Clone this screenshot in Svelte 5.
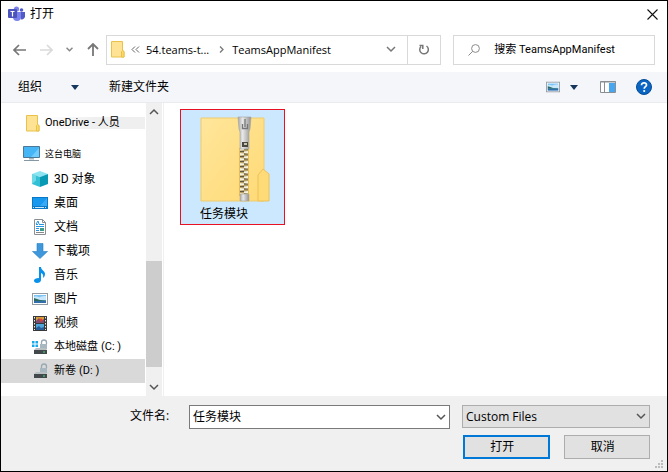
<script>
  let fileName = $state('任务模块');
  let search = $state('');
  let selected = $state('新卷');

  const places = [
    { icon: 'cube', label: '3D 对象' },
    { icon: 'desktop', label: '桌面' },
    { icon: 'document', label: '文档' },
    { icon: 'download', label: '下载项' },
    { icon: 'music', label: '音乐' },
    { icon: 'picture', label: '图片' },
    { icon: 'video', label: '视频' },
    { icon: 'windrive', label: '本地磁盘', drive: '(C: )' },
    { icon: 'drive', label: '新卷', drive: '(D: )' }
  ];
</script>

{#snippet folder()}
  <svg width="14" height="17" viewBox="0 0 14 17">
    <path d="M.5 .5h11v9l1.5 1v5.500H.5z" fill="#ffe394" stroke="#e8c24b" />
    <path d="M10.500 16v-5.500l1-1 1.500 1V16z" fill="#ffd968" stroke="#e8c24b" />
  </svg>
{/snippet}

{#snippet picture()}
  <rect x=".5" y="2.500" width="15" height="11" fill="#fff" stroke="#929ba3" />
  <path d="M2 4h12v8H2z" fill="#7cc4f4" />
  <path d="M2 6c3-2 4 1 6 0s4-1 6-1v4H2z" fill="#c9e7fa" />
  <path d="M2 7l3 1 3 1 6 .5V10H2z" fill="#2d6b62" />
  <path d="M2 10h12v2H2z" fill="#326fa8" />
{/snippet}

{#snippet chevron()}
  <svg width="10" height="7" viewBox="0 0 10 7"><path d="M1 1l4 4 4-4" fill="none" stroke="currentColor" stroke-width="1.500" /></svg>
{/snippet}

{#snippet placeIcon(name)}
  <svg width="16" height="16" viewBox="0 0 16 16">
    {#if name === 'cube'}
      <path d="M8 0l8 3-8 3-8-3z" fill="#8ce4f0" />
      <path d="M0 3l8 3v10l-8-3z" fill="#35bfd5" />
      <path d="M16 3L8 6v10l8-3z" fill="#0899b5" />
      <path d="M0 3l4 1.500v5L0 13z" fill="#6ed9e6" />
    {:else if name === 'desktop'}
      <path d="M0 2h16v12H0z" fill="#0878c9" />
      <path d="M1 3h14v8H1z" fill="#1698ee" />
      <path d="M8 11l7-8v8z" fill="#38aaf5" />
      <path d="M1 12.500h1m1 0h9m1 0h1" stroke="#c7e9ff" />
    {:else if name === 'document'}
      <path d="M2.500 .5h8l3 3v12h-11z" fill="#fff" stroke="#8a8f94" />
      <path d="M10.500 .5v3h3" fill="none" stroke="#8a8f94" />
      <path d="M4 5.500h2M7 5.500h5M4 7.500h8M4 9.500h3M4 11.500h3" stroke="#2694e0" />
      <path d="M4 5l2-3 1 3" fill="none" stroke="#2694e0" />
      <path d="M8 9h4v3H8z" fill="#3c9c86" /><path d="M4 13.500h8" stroke="#888" />
    {:else if name === 'download'}
      <path d="M5 .5h6v8h4.500L8 15.500.5 8.500H5z" fill="#3f97dc" stroke="#277fc5" stroke-width=".6" />
    {:else if name === 'music'}
      <path d="M7 0h2c0 3 4 4 4 7 0 2-1 3-2 4 .5-3 0-4-2-5v7c0 2-2 3-4 3s-3-1-3-2.500S4 11 7 11z" fill="#0791ea" />
    {:else if name === 'picture'}
      {@render picture()}
    {:else if name === 'video'}
      <path d="M1 1h14v15H1z" fill="#393939" />
      <path d="M2.500 2v13M13.500 2v13" stroke="#eee" stroke-dasharray="1.500 1.500" />
      <path d="M4 2h8v6H4z" fill="#d69d38" /><path d="M4 9h8v6H4z" fill="#4da7dc" />
      <path d="M4 6l3-3 2 3 3-2v4H4z" fill="#7c4c74" /><path d="M4 13l3-2 2 2 3-1v3H4z" fill="#295d9a" />
      <circle cx="9" cy="5" r="1.500" fill="#e33c2e" />
    {:else}
      {#if name === 'windrive'}
        <path d="M0 2h2.500v2.500H0zM3.500 2H6v2.500H3.500zM0 5.500h2.500V8H0zM3.500 5.500H6V8H3.500z" fill="#13a9eb" />
      {/if}
      <path d="M9.500 5V3.500a2.500 2.500 0 0 1 5 0V5" fill="none" stroke="#99a9b3" stroke-width="1.300" />
      <path d="M8 5h7v5H8z" fill="#a8b8c1" />
      <path d="M4 9h9l2 2H2z" fill="#b9c0c3" />
      <path d="M2 11h13v4H2z" fill="#42484c" />
      <path d="M11 13h2" stroke="#3be26a" />
    {/if}
  </svg>
{/snippet}

<main class="dialog">
  <header class="title">
    <svg width="17" height="16" viewBox="0 0 17 16">
      <circle cx="13.500" cy="4" r="1.800" fill="#5059c9" />
      <circle cx="8.500" cy="3" r="2.600" fill="#7b83eb" />
      <path d="M11 6h6v4.500a3 3 0 0 1-4 2.700z" fill="#5059c9" />
      <path d="M5 6h8v5a4 4 0 0 1-8 0z" fill="#7b83eb" />
      <rect y="3" width="9" height="9" rx="1" fill="#4b53bc" />
      <path d="M2.500 5.500h4M4.500 5.500v5" stroke="#fff" stroke-width="1.200" />
    </svg>
    <h1>打开</h1>
    <button class="plain close" aria-label="关闭">
      <svg width="11" height="11" viewBox="0 0 11 11"><path d="M.5 .5l10 10M10.500 .5l-10 10" stroke="#111" stroke-width="1.100" /></svg>
    </button>
  </header>

  <div class="navbar">
    <div class="arrows">
      <button class="plain" aria-label="后退"><svg width="13" height="12" viewBox="0 0 13 12"><path d="M13 6H1M6 1L1 6l5 5" fill="none" stroke="#777" stroke-width="1.700" /></svg></button>
      <button class="plain" aria-label="前进"><svg width="13" height="12" viewBox="0 0 13 12"><path d="M0 6h12M7 1l5 5-5 5" fill="none" stroke="#dadada" stroke-width="1.700" /></svg></button>
      <button class="plain" aria-label="最近位置"><svg width="7" height="5" viewBox="0 0 7 5"><path d="M.5 .7l3 3 3-3" fill="none" stroke="#888" stroke-width="1.500" /></svg></button>
      <button class="plain" aria-label="上移"><svg width="12" height="13" viewBox="0 0 12 13"><path d="M6 13V1M1 6l5-5 5 5" fill="none" stroke="#777" stroke-width="1.800" /></svg></button>
    </div>
    <div class="address">
      {@render folder()}
      <svg class="quote" width="9" height="7" viewBox="0 0 9 7"><path d="M4 .5l-3 3 3 3M8 .5l-3 3 3 3" fill="none" stroke="#666" /></svg>
      <a class="crumb first" href="#parent">54.teams-t...</a>
      <svg class="sep" width="5" height="7" viewBox="0 0 5 7"><path d="M1 .5l3 3-3 3" fill="none" stroke="#777" stroke-width="1.300" /></svg>
      <a class="crumb" href="#current">TeamsAppManifest</a>
      <button class="plain history" aria-label="以前的位置">{@render chevron()}</button>
      <button class="plain refresh" aria-label="刷新">
        <svg width="12" height="12" viewBox="0 0 12 12"><path d="M8.500 2A4.300 4.300 0 1 1 3 2.500M1.500 1.500h3.300v3.500" fill="none" stroke="#777" stroke-width="1.500" /></svg>
      </button>
    </div>
    <label class="search">
      <svg width="12" height="12" viewBox="0 0 12 12"><circle cx="7.500" cy="4.500" r="3.900" fill="none" stroke="#8b8b8b" /><path d="M4.700 7.300L.5 11.500" stroke="#8b8b8b" /></svg>
      <input type="text" bind:value={search} placeholder="搜索 TeamsAppManifest" aria-label="搜索 TeamsAppManifest" />
    </label>
  </div>

  <div class="toolbar">
    <button class="plain organize">组织 <svg width="8" height="5" viewBox="0 0 8 5"><path d="M0 0h8L4 5z" fill="#15375d" /></svg></button>
    <button class="plain">新建文件夹</button>
    <div class="tools">
      <button class="plain view" aria-label="更改视图">
        <svg width="14" height="14" viewBox="0 0 16 16">{@render picture()}</svg>
        <svg width="8" height="5" viewBox="0 0 8 5"><path d="M0 0h8L4 5z" fill="#15375d" /></svg>
      </button>
      <button class="plain" aria-label="预览窗格">
        <svg width="16" height="12" viewBox="0 0 16 12"><path d="M.5 .5h15v11H.5z" fill="#fff" stroke="#8a8f94" /><path d="M0 1h16M4.500 1v10" stroke="#8a8f94" /><path d="M9 2h6v9H9z" fill="#47a6f0" /></svg>
      </button>
      <button class="plain" aria-label="帮助">
        <svg width="16" height="16" viewBox="0 0 16 16"><circle cx="8" cy="8" r="7.500" fill="#0a66c2" stroke="#064c98" /><path d="M5.500 6.200c0-3.400 5.200-3 5 0-.1 1.500-2.300 1.500-2.300 3.500" fill="none" stroke="#fff" stroke-width="1.700" /><circle cx="8.200" cy="12" r="1.100" fill="#fff" /></svg>
      </button>
    </div>
  </div>

  <div class="content">
    <nav aria-label="文件夹">
      <a class="onedrive" href="#onedrive">{@render folder()}<span>OneDrive - 人员</span></a>
      <a class="computer" href="#computer">
        <svg width="17" height="16" viewBox="0 0 17 16">
          <path d="M.5 .5h16v11H.5z" fill="#45b5f5" stroke="#4b7894" /><path d="M8 11l8-9v9z" fill="#70cbff" />
          <path d="M6 12h5v1.500H6z" fill="#a7b5be" /><path d="M1 14.500h15" stroke="#8497a5" />
        </svg>
        <span>这台电脑</span>
      </a>
      <ul>
        {#each places as place}
          <li>
            <a href="#place" class:selected={selected === place.label} onclick={() => (selected = place.label)}>
              {@render placeIcon(place.icon)}
              <span class:small={place.drive}>{place.label}</span>
              {#if place.drive}<span class="letter">{place.drive}</span>{/if}
            </a>
          </li>
        {/each}
      </ul>
    </nav>
    <div class="scrollbar">
      <button class="plain up" aria-label="向上滚动">{@render chevron()}</button>
      <div class="track"><div class="thumb"></div></div>
      <button class="plain" aria-label="向下滚动">{@render chevron()}</button>
    </div>
    <section class="files" aria-label="文件">
      <button class="file">
        <svg width="70" height="86" viewBox="0 0 70 86">
          <defs>
            <linearGradient id="paper" x2="1" y2="1"><stop stop-color="#ffe69b" /><stop offset="1" stop-color="#ffda76" /></linearGradient>
            <linearGradient id="metal"><stop stop-color="#a5a5a5" /><stop offset=".35" stop-color="#e8e8e8" /><stop offset="1" stop-color="#929292" /></linearGradient>
            <pattern id="teeth" width="8" height="5" patternUnits="userSpaceOnUse">
              <path d="M0 0h8v5H0z" fill="#b5a06a" />
              <path d="M0 0h4v1H0zM4 2.500h4v1H4z" fill="#5f563c" />
              <path d="M0 2l4 .5V4L0 4.500zM8 0L4 .5V2l4 .5z" fill="#f4f1df" />
            </pattern>
          </defs>
          <path d="M1 2h63v83H1z" fill="url(#paper)" stroke="#efcb6c" />
          <path d="M58 85V59l5-6 6 5v27z" fill="#ffdb77" stroke="#ecc15b" />
          <path d="M40 32h8v48h-8z" fill="url(#teeth)" />
          <path d="M39 32h1v48h-1zM48 32h1v48h-1z" fill="#e5bd5d" />
          <path d="M38 1h13l-1 12-1 3v17h-9V16l-1-3z" fill="url(#metal)" stroke="#a2a29e" stroke-width=".6" />
          <path d="M42.500 8v4.500h5V8M45 3v8" fill="none" stroke="#777" stroke-width="1.300" />
          <path d="M42 26h6v5h-6z" fill="#494942" /><path d="M44 27h3v2h-3z" fill="#c7c5ae" />
          <path d="M40 78h9v7h-9z" fill="url(#metal)" stroke="#b1aa94" stroke-width=".6" />
        </svg>
        <span>任务模块</span>
      </button>
    </section>
  </div>

  <footer>
    <label class="name-label" for="file-name">文件名:</label>
    <div class="combo">
      <input id="file-name" type="text" bind:value={fileName} />
      <button class="plain" aria-label="显示文件名">{@render chevron()}</button>
    </div>
    <div class="actions">
      <div class="filter">
        <select aria-label="文件类型"><option>Custom Files</option></select>
        {@render chevron()}
      </div>
      <div class="buttons">
        <button class="action primary">打开</button>
        <button class="action">取消</button>
      </div>
    </div>
    <svg class="grip" width="9" height="9" viewBox="0 0 9 9"><path d="M6 0h2v2H6zM3 3h2v2H3zM6 3h2v2H6zM0 6h2v2H0zM3 6h2v2H3zM6 6h2v2H6z" fill="#bcbcbc" /></svg>
  </footer>
</main>

<style>
  :global(body) { margin: 0; }
  * { box-sizing: border-box; }
  .dialog {
    display: flex;
    flex-direction: column;
    min-height: 100vh;
    border: 1px solid #000;
    background: #fff;
    color: #000;
    font: 12px/16px "Open Sans", "Noto Sans CJK SC", sans-serif;
  }
  svg { display: block; flex: none; }
  button, input, select { font: inherit; color: inherit; }
  a { color: inherit; text-decoration: none; }
  .plain { display: flex; align-items: center; justify-content: center; padding: 0; border: 0; background: none; }

  .title { display: flex; align-items: center; height: 26px; padding: 0 9px 0 7px; }
  h1 { margin: 0 0 0 5px; font: inherit; }
  .close { margin-left: auto; }

  .navbar { display: flex; align-items: center; gap: 12px; height: 45px; padding: 0 12px; }
  .arrows { display: flex; flex: none; align-items: center; justify-content: space-between; width: 86px; }
  .address { display: flex; flex: 330; min-width: 0; align-items: center; height: 30px; margin-left: -5px; padding-left: 4px; border: 1px solid #d9d9d9; font-size: 11px; }
  .quote { margin-left: 6px; }
  .crumb { white-space: nowrap; }
  .first { margin-left: 6px; }
  .sep { margin: 0 8px 0 10px; }
  .history { width: 32px; height: 28px; margin-left: auto; color: #777; }
  .refresh { width: 33px; height: 28px; border-left: 1px solid #d9d9d9; }
  .search { display: flex; flex: 186; min-width: 0; align-items: center; gap: 14px; height: 30px; padding-left: 14px; border: 1px solid #d9d9d9; font-family: Roboto, "Noto Sans CJK SC", sans-serif; font-size: 11px; }
  .search input { flex: 1; min-width: 0; padding: 0; border: 0; outline: 0; background: none; }
  .search input::placeholder { color: #000; opacity: 1; }

  .toolbar { display: flex; align-items: center; gap: 30px; height: 31px; padding: 0 15px 0 17px; border-bottom: 1px solid #e9ebee; background: #f4f6f9; }
  .organize { gap: 29px; }
  .tools { display: flex; align-items: center; gap: 20px; margin-left: auto; }
  .view { gap: 10px; margin-right: 2px; }

  .content { display: flex; flex: 1; }
  nav { display: flex; flex: none; flex-direction: column; width: 144px; padding: 8px 0 12px; font-family: Roboto, "Noto Sans CJK SC", sans-serif; white-space: nowrap; }
  nav a { display: flex; align-items: center; }
  .onedrive { height: 24px; padding-left: 25px; gap: 4px; font-size: 11px; }
  .onedrive span { flex: 1; height: 12px; padding-left: 1px; background: linear-gradient(90deg, #fff, #efefef 50%); line-height: 12px; }
  .computer { height: 24px; margin: 7px 0 1px; padding-left: 22px; gap: 5px; font-size: 9px; }
  ul { margin: 0; padding: 0; list-style: none; }
  li a { height: 24px; padding-left: 31px; gap: 6px; }
  .selected { background: #d9d9d9; }
  .small, .letter { font-size: 11px; }
  .letter { margin-left: -3px; }
  .scrollbar { display: flex; flex: none; flex-direction: column; width: 17px; border-right: 1px solid #fff; margin-left: 1px; background: #f0f0f0; color: #555; }
  .scrollbar .plain { height: 17px; }
  .up { transform: rotate(180deg); }
  .track { display: flex; flex: 1; flex-direction: column; justify-content: flex-end; padding-bottom: 12px; }
  .thumb { height: 43%; background: #cdcdcd; }
  .files { flex: 1; padding: 6px 16px; border-left: 1px solid #f0f0f0; }
  .file { display: flex; flex-direction: column; align-items: flex-start; gap: 4px; width: 105px; height: 116px; padding: 6px 0 0 19px; border: 1px solid #e81123; background: #cce8ff; }

  footer { position: relative; display: flex; gap: 12px; padding: 9px 17px 12px 129px; background: #f0f0f0; }
  .name-label { width: 47px; margin-top: 3px; }
  .combo { display: flex; flex: 259; height: 24px; border: 1px solid #7a7a7a; background: #fff; }
  .combo input { flex: 1; min-width: 0; padding: 0 0 0 3px; border: 0; outline: 0; background: none; }
  .combo .plain { width: 17px; color: #555; }
  .actions { flex: 188; min-width: 0; }
  .filter { position: relative; }
  select { display: block; width: 100%; height: 23px; padding: 0 24px 0 3px; border: 1px solid #adadad; border-radius: 0; background: #e1e1e1; appearance: none; }
  .filter svg { position: absolute; top: 8px; right: 4px; color: #555; pointer-events: none; }
  .buttons { display: grid; grid-template-columns: 1fr 1fr; gap: 14px; margin-top: 7px; padding-left: 1px; }
  .action { height: 24px; padding: 0 8px 0 0; border: 1px solid #adadad; background: #e1e1e1; line-height: 20px; }
  .primary { border: 2px solid #0078d7; }
  .grip { position: absolute; right: 3px; bottom: 2px; }
</style>
